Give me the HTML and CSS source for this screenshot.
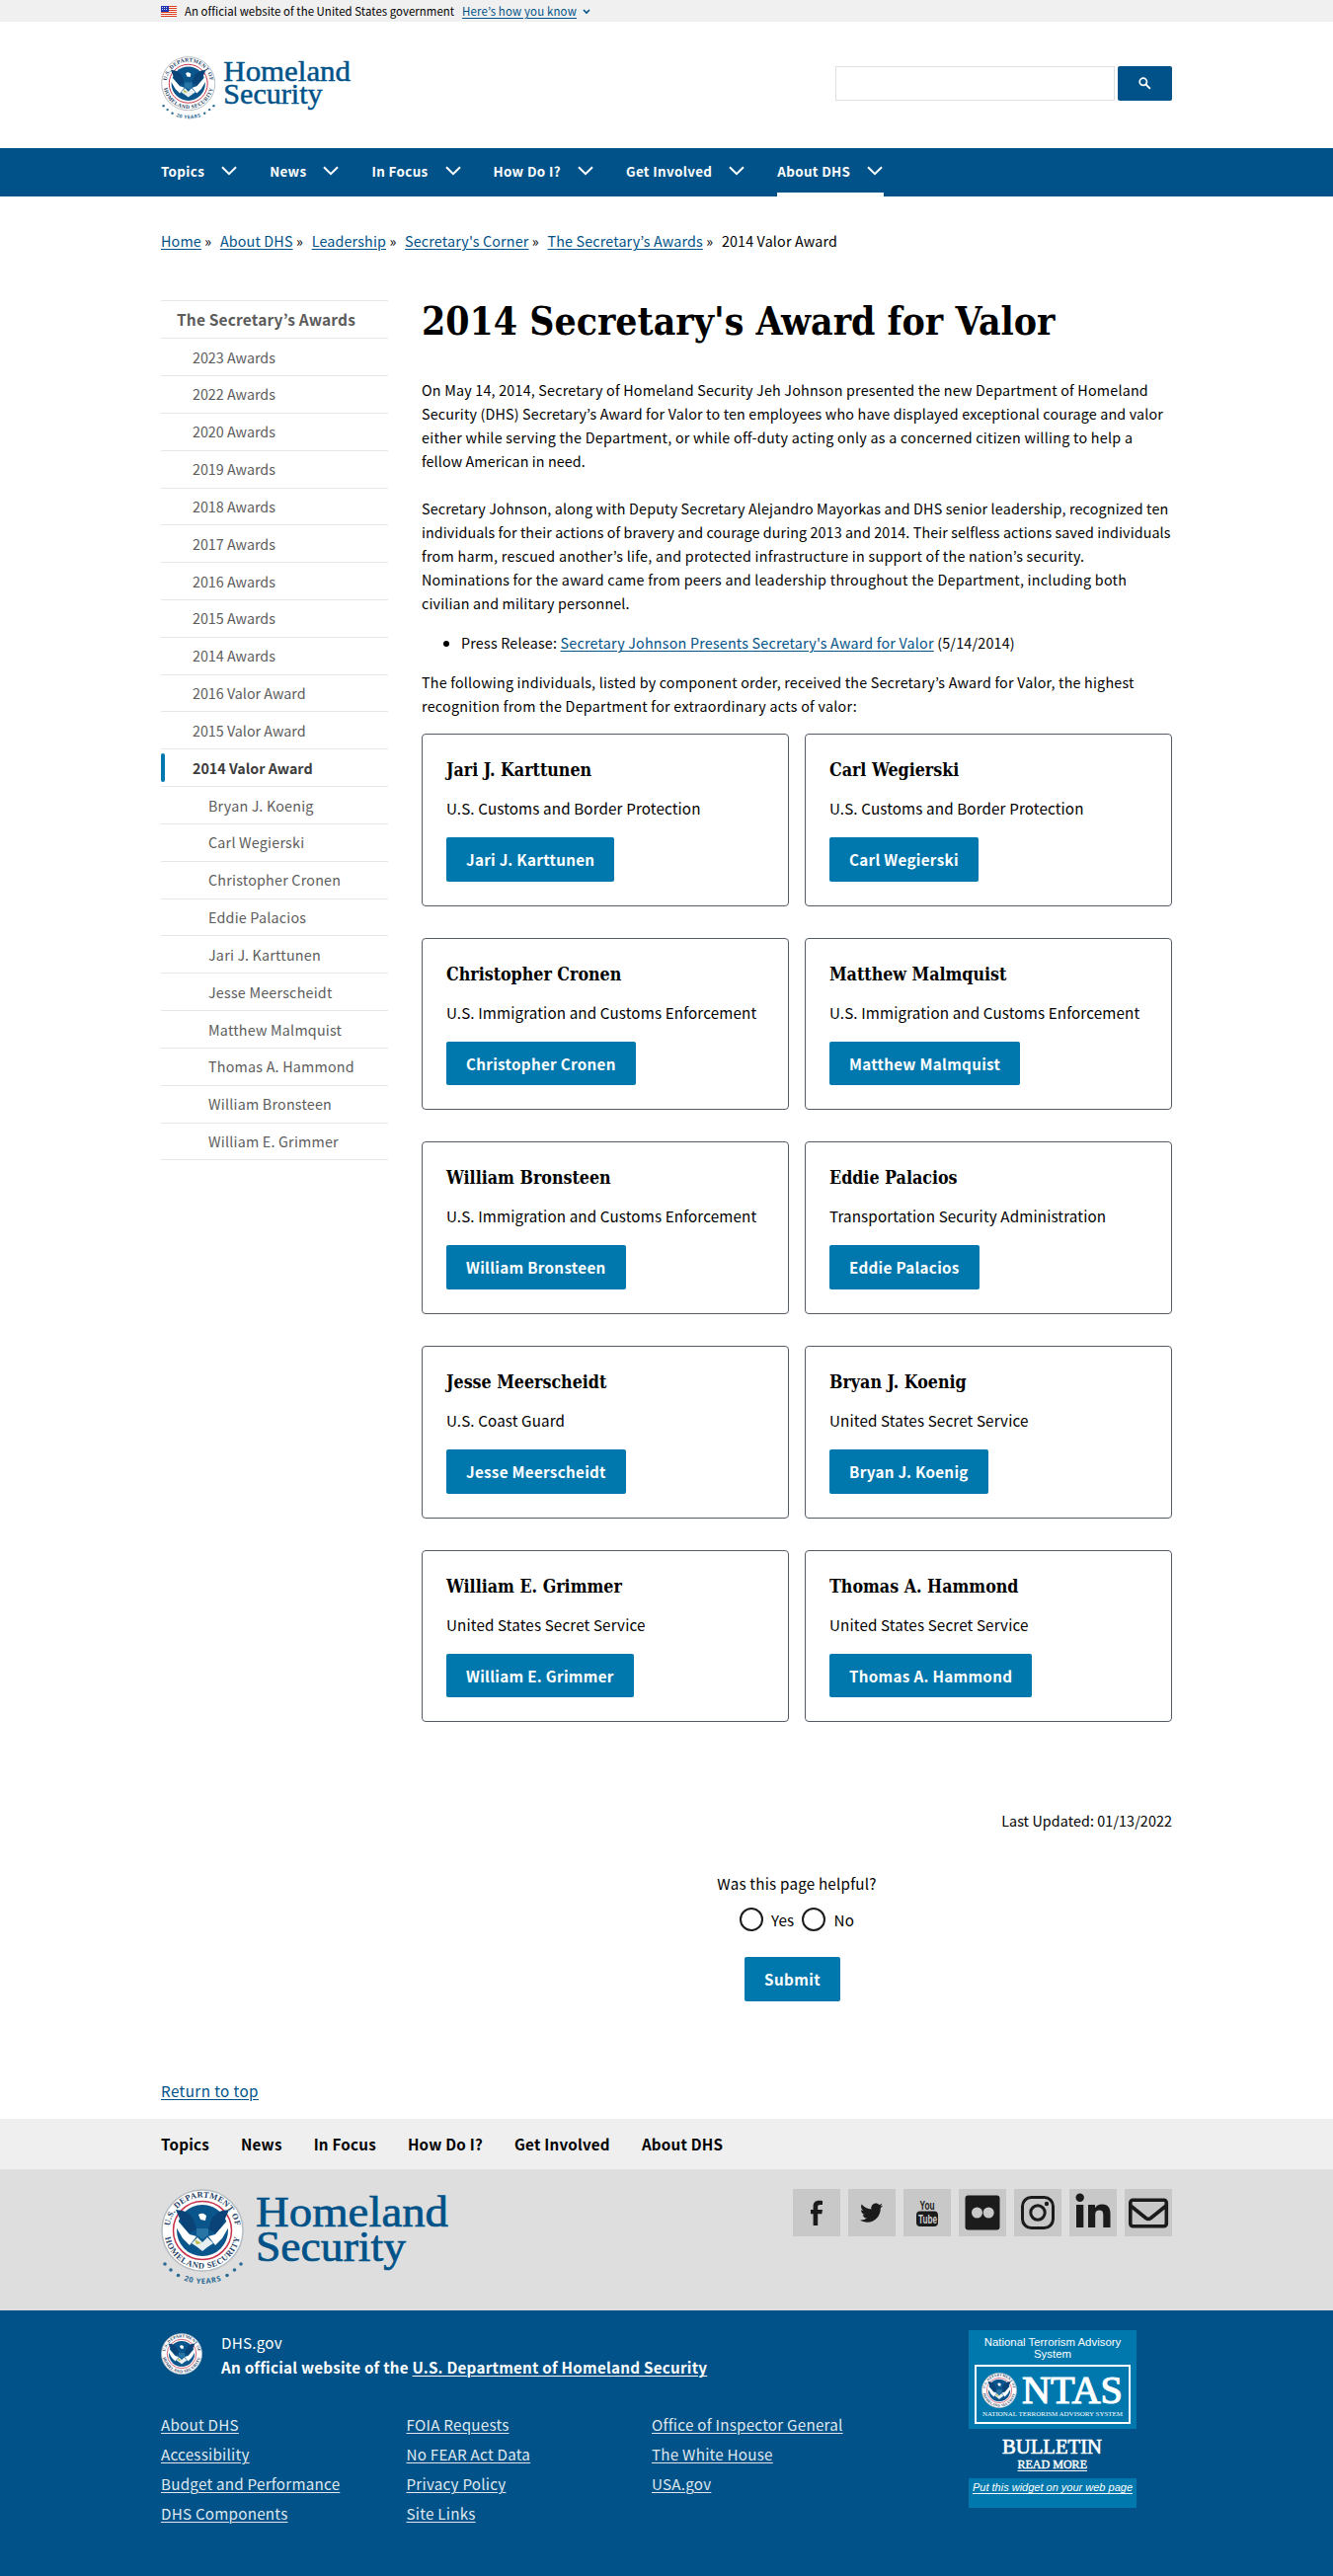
FILE: index.html
```html
<!DOCTYPE html>
<html lang="en">
<head>
<meta charset="utf-8">
<title>2014 Secretary's Award for Valor | Homeland Security</title>
<link rel="stylesheet" href="styles.css">
</head>
<body>
<svg class="sprite" aria-hidden="true">
  <defs>
    <path id="arc-top" d="M8.500 42A33.500 33.500 0 0 1 75.500 42"/>
    <path id="arc-bottom" d="M3.500 42A38.500 38.500 0 0 0 80.500 42"/>
    <path id="arc-years" d="M-12 42A54 54 0 0 0 96 42"/>
    <symbol id="seal" viewBox="0 0 84 84">
      <circle cx="42" cy="42" r="41" fill="#fff" stroke="#b5bcc2" stroke-width="1.500"/>
      <text class="seal-text"><textPath href="#arc-top" startOffset="50%" text-anchor="middle" textLength="96">U.S. DEPARTMENT OF</textPath></text>
      <text class="seal-text"><textPath href="#arc-bottom" startOffset="50%" text-anchor="middle" textLength="106">HOMELAND SECURITY</textPath></text>
      <circle cx="42" cy="42" r="29.500" fill="#fff" stroke="#c8324a" stroke-width="1.500"/>
      <circle cx="42" cy="42" r="26" fill="#0a568c"/>
      <path d="M15 21L22 22Q29 24 33 31L36 41L28 45L22 37ZM69 21L62 22Q55 24 51 31L48 41L56 45L62 37Z" fill="#0a4377"/>
      <path d="M16 31L29 46L36 48L29 57L22 50L15 38ZM68 31L55 46L48 48L55 57L62 50L69 38Z" fill="#fff"/>
      <path d="M33 24Q42 18 51 24L48 40H36Z" fill="#0a568c"/>
      <path d="M38 26Q42 23 46 27L45 32L40 31Z" fill="#fff"/>
      <path d="M37 49L42 54L47 49L53 55L47 59L42 63L37 59L31 55Z" fill="#e8eff2"/>
      <path d="M34 51L41 55L36 56Z" fill="#b8bd3f"/>
      <path d="M36 40H48V47L42 51L36 47Z" fill="#2874a5"/>
    </symbol>
    <symbol id="logo" viewBox="0 0 294 100">
      <use href="#seal" x="0" y="0" width="84" height="84"/>
      <g fill="#2a6b94">
        <circle cx="4" cy="76" r="1.800"/><circle cx="10" cy="82" r="1.800"/><circle cx="17.500" cy="87.500" r="1.800"/>
        <circle cx="67" cy="87.500" r="1.800"/><circle cx="74.500" cy="82" r="1.800"/><circle cx="81" cy="76" r="1.800"/>
      </g>
      <text class="years-text"><textPath href="#arc-years" startOffset="50%" text-anchor="middle" textLength="39">20 YEARS</textPath></text>
      <text class="wordmark" x="96" y="38" textLength="195" lengthAdjust="spacingAndGlyphs">Homeland</text>
      <text class="wordmark" x="96" y="73" textLength="152" lengthAdjust="spacingAndGlyphs">Security</text>
    </symbol>
    <symbol id="chevron" viewBox="0 0 18 10"><path d="M2 1.200L9 8.200L16 1.200" fill="none" stroke="currentColor" stroke-width="2"/></symbol>
  </defs>
</svg>

<div class="banner">
  <div class="container banner-row">
    <svg class="flag" viewBox="0 0 16 11"><path fill="#fff" d="M0 0h16v11H0z"/><path d="M0 .5h16M0 2.500h16M0 4.500h16M0 6.500h16M0 8.500h16M0 10.500h16" stroke="#db3e1f"/><path fill="#1e33b1" d="M0 0h8v6H0z"/><path d="M1 1.500h6M1 3.500h6" stroke="#fff" stroke-width=".8" stroke-dasharray="1 1"/></svg>
    <span>An official website of the United States government</span>
    <a href="#">Here’s how you know</a>
    <svg class="caret" viewBox="0 0 8 6"><path d="M1 1l3 3 3-3" fill="none" stroke="#005288" stroke-width="1.600"/></svg>
  </div>
</div>

<header class="container header">
  <svg class="logo-small"><use href="#logo"/></svg>
  <form class="search">
    <input type="text" aria-label="Search">
    <button type="button" aria-label="Search"><svg viewBox="0 0 14 14"><circle cx="5.200" cy="5.200" r="3.900" fill="none" stroke="#fff" stroke-width="1.900"/><path d="M8 8l4.800 4.800" stroke="#fff" stroke-width="2.100"/></svg></button>
  </form>
</header>

<nav class="primary">
  <div class="container primary-row">
    <a href="#">Topics<svg><use href="#chevron"/></svg></a>
    <a href="#">News<svg><use href="#chevron"/></svg></a>
    <a href="#">In Focus<svg><use href="#chevron"/></svg></a>
    <a href="#">How Do I?<svg><use href="#chevron"/></svg></a>
    <a href="#">Get Involved<svg><use href="#chevron"/></svg></a>
    <a href="#" class="current">About DHS<svg><use href="#chevron"/></svg></a>
  </div>
</nav>

<div class="container crumbs">
  <span><a href="#">Home</a> »</span>
  <span><a href="#">About DHS</a> »</span>
  <span><a href="#">Leadership</a> »</span>
  <span><a href="#">Secretary's Corner</a> »</span>
  <span><a href="#">The Secretary’s Awards</a> »</span>
  <span>2014 Valor Award</span>
</div>

<div class="container columns">
  <aside class="sidenav">
    <a class="lvl1" href="#">The Secretary’s Awards</a>
    <a href="#">2023 Awards</a>
    <a href="#">2022 Awards</a>
    <a href="#">2020 Awards</a>
    <a href="#">2019 Awards</a>
    <a href="#">2018 Awards</a>
    <a href="#">2017 Awards</a>
    <a href="#">2016 Awards</a>
    <a href="#">2015 Awards</a>
    <a href="#">2014 Awards</a>
    <a href="#">2016 Valor Award</a>
    <a href="#">2015 Valor Award</a>
    <a class="active" href="#">2014 Valor Award</a>
    <a class="lvl3" href="#">Bryan J. Koenig</a>
    <a class="lvl3" href="#">Carl Wegierski</a>
    <a class="lvl3" href="#">Christopher Cronen</a>
    <a class="lvl3" href="#">Eddie Palacios</a>
    <a class="lvl3" href="#">Jari J. Karttunen</a>
    <a class="lvl3" href="#">Jesse Meerscheidt</a>
    <a class="lvl3" href="#">Matthew Malmquist</a>
    <a class="lvl3" href="#">Thomas A. Hammond</a>
    <a class="lvl3" href="#">William Bronsteen</a>
    <a class="lvl3" href="#">William E. Grimmer</a>
  </aside>

  <main>
    <h1>2014 Secretary's Award for Valor</h1>
    <p>On May 14, 2014, Secretary of Homeland Security Jeh Johnson presented the new Department of Homeland<br>
      <span class="snug">Security (DHS) Secretary’s Award for Valor to ten employees who have displayed exceptional courage and valor</span><br>
      <span class="loose">either while serving the Department, or while off-duty acting only as a concerned citizen willing to help a</span><br>
      <span class="tight">fellow American in need.</span></p>
    <p><span class="snug">Secretary Johnson, along with Deputy Secretary Alejandro Mayorkas and DHS senior leadership, recognized ten</span><br>
      <span class="tight">individuals for their actions of bravery and courage during 2013 and 2014. Their selfless actions saved individuals</span><br>
      <span class="loose">from harm, rescued another’s life, and protected infrastructure in support of the nation’s security.</span><br>
      <span class="loose">Nominations for the award came from peers and leadership throughout the Department, including both</span><br>
      <span class="snug">civilian and military personnel.</span></p>
    <ul><li>Press Release: <a href="#">Secretary Johnson Presents Secretary's Award for Valor</a> (5/14/2014)</li></ul>
    <p class="lead-in">The following individuals, listed by component order, received the Secretary’s Award for Valor, the highest<br>
      <span class="loose">recognition from the Department for extraordinary acts of valor:</span></p>

    <div class="cards">
      <section class="card"><h2>Jari J. Karttunen</h2><p>U.S. Customs and Border Protection</p><a class="btn" href="#">Jari J. Karttunen</a></section>
      <section class="card"><h2>Carl Wegierski</h2><p>U.S. Customs and Border Protection</p><a class="btn" href="#">Carl Wegierski</a></section>
      <section class="card"><h2>Christopher Cronen</h2><p>U.S. Immigration and Customs Enforcement</p><a class="btn" href="#">Christopher Cronen</a></section>
      <section class="card"><h2>Matthew Malmquist</h2><p>U.S. Immigration and Customs Enforcement</p><a class="btn" href="#">Matthew Malmquist</a></section>
      <section class="card"><h2>William Bronsteen</h2><p>U.S. Immigration and Customs Enforcement</p><a class="btn" href="#">William Bronsteen</a></section>
      <section class="card"><h2>Eddie Palacios</h2><p>Transportation Security Administration</p><a class="btn" href="#">Eddie Palacios</a></section>
      <section class="card"><h2>Jesse Meerscheidt</h2><p>U.S. Coast Guard</p><a class="btn" href="#">Jesse Meerscheidt</a></section>
      <section class="card"><h2>Bryan J. Koenig</h2><p>United States Secret Service</p><a class="btn" href="#">Bryan J. Koenig</a></section>
      <section class="card"><h2>William E. Grimmer</h2><p>United States Secret Service</p><a class="btn" href="#">William E. Grimmer</a></section>
      <section class="card"><h2>Thomas A. Hammond</h2><p>United States Secret Service</p><a class="btn" href="#">Thomas A. Hammond</a></section>
    </div>

    <div class="updated">Last Updated: 01/13/2022</div>

    <form class="feedback">
      <div class="question">Was this page helpful?</div>
      <div class="choices">
        <label><i class="radio"></i>Yes</label>
        <label><i class="radio"></i>No</label>
      </div>
      <a class="btn" href="#">Submit</a>
    </form>
  </main>
</div>

<footer>
  <div class="container totop"><a href="#">Return to top</a></div>
  <div class="footer-nav">
    <div class="container footer-nav-row">
      <a href="#">Topics</a><a href="#">News</a><a href="#">In Focus</a><a href="#">How Do I?</a><a href="#">Get Involved</a><a href="#">About DHS</a>
    </div>
  </div>
  <div class="footer-brand">
    <div class="container footer-brand-row">
      <svg class="logo-large"><use href="#logo"/></svg>
      <div class="social">
        <a href="#" aria-label="Facebook"><svg viewBox="0 0 48 48"><path d="M30 12v4h-2.500c-1.700 0-2.300.8-2.300 2.200V21H30l-.7 4.300h-4.100V37h-4.600V25.300H18V21h2.600v-3.200c0-4 2.200-6 5.800-6 1.600 0 3 .1 3.600.2z"/></svg></a>
        <a href="#" aria-label="Twitter"><svg viewBox="0 0 48 48"><path transform="translate(10.400 10) scale(1.100 1.130)" d="M22.460 6c-.77.350-1.600.580-2.460.690.880-.530 1.560-1.370 1.880-2.380-.830.500-1.750.850-2.720 1.050C18.370 4.500 17.260 4 16 4c-2.350 0-4.270 1.920-4.270 4.290 0 .340.040.670.110.980C8.280 9.090 5.110 7.380 3 4.790c-.370.630-.580 1.370-.580 2.150 0 1.490.750 2.810 1.910 3.560-.710 0-1.370-.200-1.950-.500v.030c0 2.080 1.480 3.820 3.440 4.210a4.220 4.220 0 0 1-1.930.070 4.280 4.280 0 0 0 4 2.980 8.521 8.521 0 0 1-5.330 1.840c-.340 0-.680-.020-1.020-.060C3.440 20.290 5.700 21 8.120 21 16 21 20.330 14.460 20.330 8.790c0-.190 0-.370-.010-.560.840-.600 1.560-1.360 2.140-2.230z"/></svg></a>
        <a href="#" aria-label="YouTube"><svg viewBox="0 0 48 48"><text class="yt" x="16.500" y="20.500" textLength="15" lengthAdjust="spacingAndGlyphs">You</text><rect x="13" y="22.500" width="22" height="15.500" rx="4"/><text class="yt yt-light" x="15" y="35" textLength="19" lengthAdjust="spacingAndGlyphs">Tube</text></svg></a>
        <a href="#" aria-label="Flickr"><svg viewBox="0 0 48 48"><path fill-rule="evenodd" d="M9.500 6.500h29a3 3 0 0 1 3 3v29a3 3 0 0 1-3 3h-29a3 3 0 0 1-3-3v-29a3 3 0 0 1 3-3zM13 24a5.500 5.500 0 1 0 11 0a5.500 5.500 0 1 0-11 0zM24.700 24a5.500 5.500 0 1 0 11 0a5.500 5.500 0 1 0-11 0z"/></svg></a>
        <a href="#" aria-label="Instagram"><svg viewBox="0 0 48 48"><g fill="none" stroke="#1b1b1b" stroke-width="3"><rect x="8.500" y="8.500" width="31" height="31" rx="9"/><circle cx="24" cy="24" r="7.200"/></g><circle cx="33" cy="15" r="2.200"/></svg></a>
        <a href="#" aria-label="LinkedIn"><svg viewBox="0 0 48 48"><circle cx="10.700" cy="8.700" r="4.200"/><path d="M7 16h7.300v23H7zM19 16h7v3.200c1.200-2.200 3.700-3.700 7-3.700 7 0 8.500 4.600 8.500 10.500v13h-7.200V27.500c0-3 0-6-3.900-6s-4.200 3-4.200 5.800V39H19z"/></svg></a>
        <a href="#" aria-label="Email"><svg viewBox="0 0 48 48"><g fill="none" stroke="#1b1b1b" stroke-width="3.600"><rect x="5.800" y="11.300" width="36.500" height="26.500" rx="2.500"/><path d="M6 17l15.500 12.500q2.500 1.800 5 0L42 17"/></g></svg></a>
      </div>
    </div>
  </div>
  <div class="identifier">
    <div class="container identifier-row">
      <div class="identifier-main">
        <div class="masthead">
          <svg><use href="#seal"/></svg>
          <div>DHS.gov<br><b>An official website of the <a href="#">U.S. Department of Homeland Security</a></b></div>
        </div>
        <div class="required">
          <div><a href="#">About DHS</a><a href="#">Accessibility</a><a href="#">Budget and Performance</a><a href="#">DHS Components</a></div>
          <div><a href="#">FOIA Requests</a><a href="#">No FEAR Act Data</a><a href="#">Privacy Policy</a><a href="#">Site Links</a></div>
          <div><a href="#">Office of Inspector General</a><a href="#">The White House</a><a href="#">USA.gov</a></div>
        </div>
      </div>
      <div class="ntas">
        <div class="ntas-head">
          National Terrorism Advisory<br>System
          <svg viewBox="0 0 158 60"><rect x="1" y="1" width="156" height="58" fill="#0078ae" stroke="#fff" stroke-width="2"/><use href="#seal" x="7" y="8" width="36" height="36"/><text class="ntas-big" x="48" y="39" textLength="102" lengthAdjust="spacingAndGlyphs">NTAS</text><text class="ntas-tiny" x="8" y="51.500" textLength="142" lengthAdjust="spacingAndGlyphs">NATIONAL TERRORISM ADVISORY SYSTEM</text></svg>
        </div>
        <svg class="bulletin" viewBox="0 0 170 50"><text class="bul" x="34" y="25" textLength="101" lengthAdjust="spacingAndGlyphs">BULLETIN</text><text class="more" x="49.500" y="40" textLength="70.500" lengthAdjust="spacingAndGlyphs">READ MORE</text><path d="M49.500 42.500h70.500" stroke="#fff"/></svg>
        <div class="ntas-foot"><a href="#">Put this widget on your web page</a></div>
      </div>
    </div>
  </div>
</footer>
</body>
</html>
```
FILE: styles.css
```css
* { box-sizing: border-box; }
body {
  margin: 0;
  background: #fff;
  color: #000;
  font-family: "Noto Sans CJK JP", "Noto Sans", sans-serif;
  font-size: 14.3px;
  line-height: 24px;
}
a { color: #005288; text-underline-offset: 2px; text-decoration-thickness: 1px; }
.sprite { position: absolute; width: 0; height: 0; }
.container { width: 1024px; margin: 0 auto; }

.seal-text { font: 600 8.5px "Liberation Serif", serif; fill: #1f3f66; letter-spacing: 0; }
.years-text { font: 700 7.5px "Open Sans", sans-serif; fill: #2a6b94; }
.wordmark { font: 44px "Liberation Serif", serif; fill: #005288; stroke: #005288; stroke-width: .7px; }

.banner { background: #f0f0f0; height: 22px; }
.banner-row { display: flex; align-items: center; height: 22px; font-size: 11.4px; line-height: 22px; letter-spacing: .055px; }
.flag { width: 16px; height: 11px; margin-right: 8px; }
.banner-row a { margin-left: 8px; letter-spacing: .18px; }
.caret { width: 8px; height: 6px; margin-left: 6px; margin-top: 2px; }

.header { display: flex; justify-content: space-between; height: 128px; padding-top: 35px; }
.logo-small { width: 194px; height: 66px; }
.search { display: flex; width: 341px; padding-top: 10px; gap: 3px; }
.search input { width: 283px; height: 35px; border: 1px solid #dfdfdf; padding: 0 8px; }
.search button { width: 55px; height: 35px; border: 0; border-radius: 2px; background: #005288; padding: 0; }
.search svg { width: 13px; height: 13px; display: block; margin: 0 auto; }

.primary { background: #005288; height: 49px; }
.primary-row { display: flex; gap: 32px; }
.primary a { display: flex; align-items: center; height: 49px; padding-bottom: 4px; color: #fff; font-weight: 700; font-size: 13.4px; letter-spacing: .35px; text-decoration: none; }
.primary svg { width: 18px; height: 10px; margin-left: 16px; }
.primary a.current { border-bottom: 4px solid #fff; padding-bottom: 0; }

.crumbs { display: flex; gap: 8.700px; padding-top: 33px; letter-spacing: .16px; }

.columns { display: flex; padding-top: 47px; }
.sidenav { width: 230px; margin: .6px 34px 0 0; border-top: 1px solid #e6e6e6; align-self: flex-start; }
.sidenav a { display: flex; align-items: center; height: 37.840px; padding-left: 32px; border-bottom: 1px solid #e6e6e6; color: #5c5c5c; text-decoration: none; }
.sidenav a.lvl1 { height: 38.600px; padding-left: 16px; font-weight: 700; font-size: 15.5px; letter-spacing: .16px; }
.sidenav a.lvl3 { padding-left: 48px; letter-spacing: .22px; }
.sidenav a.active { font-weight: 700; color: #3d3d3d; }
.sidenav a.active::before { content: ""; width: 4px; height: 29px; margin-left: -32px; margin-right: 28px; border-radius: 2px; background: #0078ae; }

main { width: 760px; letter-spacing: .21px; }
h1 { margin: 1px 0 35px; font: 700 38.8px/44px "DejaVu Serif", serif; font-stretch: condensed; letter-spacing: 0; white-space: nowrap; }
main p { margin: 0 0 24px; white-space: nowrap; }
main ul { margin: -8px 0 16px; padding-left: 40px; }
main .lead-in { margin-bottom: 16px; }
/* line fitting for the running text */
.tight { letter-spacing: .1px; }
.snug { letter-spacing: .17px; }
.loose { letter-spacing: .27px; }

.cards { display: grid; grid-template-columns: 372px 372px; gap: 32px 16px; }
.card { height: 174.700px; border: 1px solid #565c65; border-radius: 4px; padding: 24px; }
.card h2 { margin: 0; font: 700 17.700px/24px "DejaVu Serif", serif; font-stretch: condensed; letter-spacing: 0; }
.card p { margin: 13px 0 17px; font-size: 15.2px; line-height: 26px; letter-spacing: .13px; }
.btn { display: inline-flex; align-items: center; height: 44.700px; padding: 0 20px; border-radius: 2px; background: #0078ae; color: #fff; font-weight: 700; font-size: 15.2px; letter-spacing: .3px; line-height: 24px; padding-bottom: 1px; text-decoration: none; }

.updated { text-align: right; margin-top: 88px; letter-spacing: .1px; }
.feedback { display: flex; flex-direction: column; align-items: center; margin-top: 38px; font-size: 15.2px; }
.question, .choices { line-height: 26px; }
.choices { display: flex; gap: 8px; margin-top: 11px; }
.choices label { display: flex; align-items: center; }
.radio { width: 24px; height: 24px; border: 2px solid #1b1b1b; border-radius: 50%; margin-right: 8px; }
.feedback .btn { margin-top: 25px; letter-spacing: .4px; margin-right: 9px; }

.totop { padding-top: 77px; height: 119px; font-size: 15.2px; line-height: 26px; letter-spacing: .42px; }
.footer-nav { background: #efefef; height: 51px; }
.footer-nav-row { display: flex; gap: 32px; line-height: 51px; font-size: 15.2px; letter-spacing: .22px; }
.footer-nav a { color: #000; font-weight: 700; text-decoration: none; }
.footer-brand { background: #dedede; height: 143px; }
.footer-brand-row { display: flex; justify-content: space-between; padding-top: 20px; }
.logo-large { width: 294px; height: 100px; }
.social { display: flex; gap: 8px; }
.social a { width: 48px; height: 48px; background: #c8c8c8; }
.social svg { display: block; fill: #1b1b1b; }
.social .yt { font: 700 12px "Liberation Sans", sans-serif; }
.social .yt-light { fill: #d0d0d0; }

.identifier { background: #005288; height: 269px; color: #fff; font-size: 15.2px; letter-spacing: .24px; }
.identifier a { color: #dfe8f0; }
.identifier-row { display: flex; justify-content: space-between; padding-top: 20px; }
.masthead { display: flex; gap: 19px; line-height: 25px; }
.masthead svg { width: 42px; height: 42px; margin-top: 3px; letter-spacing: 0; }
.masthead a { color: #fff; }
.required { display: grid; grid-template-columns: 248.500px 248.500px 248px; margin-top: 30px; }
.required a { display: block; width: max-content; line-height: 30px; }
.ntas { width: 170px; margin-right: 36px; text-align: center; font: 11.4px/12px "Liberation Sans", sans-serif; letter-spacing: 0; }
.ntas-head { background: #0078ae; height: 100px; padding-top: 6px; }
.ntas-head svg { display: block; width: 158px; height: 60px; margin: 5px auto 0; }
.ntas-big { font: 41px "Liberation Serif", serif; fill: #fff; stroke: #fff; stroke-width: 1.2px; }
.ntas-tiny { font: 6.8px "Liberation Serif", serif; fill: #fff; }
.bulletin { display: block; width: 170px; height: 50px; }
.bul { font: 22px "Liberation Serif", serif; fill: #fff; stroke: #fff; stroke-width: .7px; }
.more { font: 12.5px "Liberation Serif", serif; fill: #fff; stroke: #fff; stroke-width: .4px; }
.ntas-foot { background: #0078ae; height: 30px; padding-top: 3px; font-style: italic; font-size: 11px; }
.ntas-foot a { color: #fff; }
```
